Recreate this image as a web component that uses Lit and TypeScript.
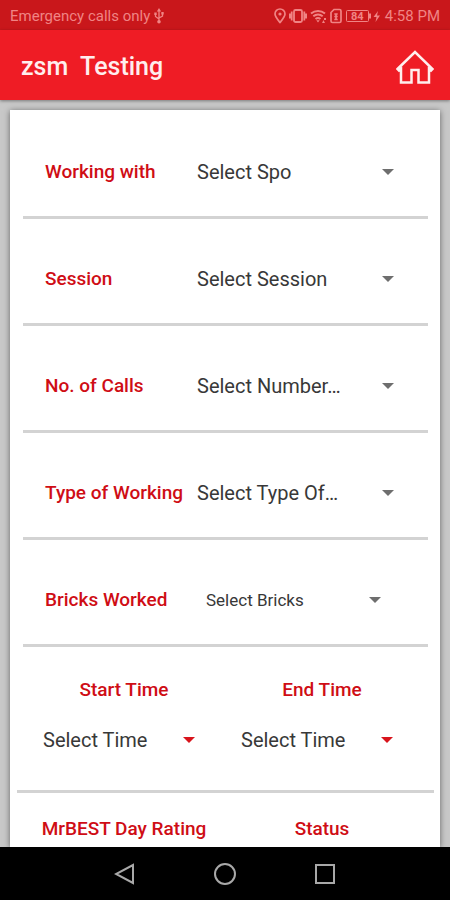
import { LitElement, html, css, svg } from "lit";
import { customElement, property } from "lit/decorators.js";

@customElement("status-bar")
class StatusBar extends LitElement {
  static styles = css`
    :host {
      display: flex;
      align-items: center;
      justify-content: space-between;
      height: 30px;
      padding: 2px 10px 0;
      box-sizing: border-box;
      background: #c9171b;
      color: #f08484;
      font-size: 15px;
      line-height: 20px;
    }
    .group { display: flex; align-items: center; gap: 4px; }
    .icons { gap: 3px; }
    svg { display: block; fill: none; stroke: currentColor; }
    .solid { fill: currentColor; stroke: none; }
    .level { font-size: 11px; font-weight: 700; fill: currentColor; stroke: none; }
  `;

  render() {
    return html`
      <div class="group">
        <span>Emergency calls only</span>
        <svg width="10" height="16" viewBox="0 0 10 16" stroke-width="1.3">
          <path d="M5 2v11M1.5 6v2.5L5 11M8.5 5.500v2.500L5 10" />
          <path class="solid" d="M5 0l2.200 3.500H2.800zM.3 4.500h2.400v2.400H.3zM7.300 4h2.400v2.400H7.300z" />
          <circle class="solid" cx="5" cy="13.800" r="1.800" />
        </svg>
      </div>
      <div class="group icons">
        <svg width="12" height="16" viewBox="0 0 12 16" stroke-width="1.700">
          <path d="M6 14.500C3 10.800 1 8.500 1 6a5 5 0 0 1 10 0c0 2.500-2 4.800-5 8.500z" />
          <circle class="solid" cx="6" cy="6" r="1.600" />
        </svg>
        <svg width="18" height="16" viewBox="0 0 18 16" stroke-width="1.800">
          <rect x="5" y="2" width="8" height="12" rx="1.500" />
          <path d="M2.700 3.500v9M.900 5.500v5M15.300 3.500v9M17.100 5.500v5" />
        </svg>
        <svg width="17" height="16" viewBox="0 0 17 16" stroke-width="2">
          <path d="M1 5.500a11 11 0 0 1 14 0M3.300 8.300a7.400 7.400 0 0 1 9.400 0M5.500 11a4 4 0 0 1 5 0" />
          <path class="solid" d="M8 14.500l-1.700-2.200h3.400zM12 15l1.500-3 1.500 3zM14 10h2v2h-2z" />
        </svg>
        <svg width="12" height="16" viewBox="0 0 12 16" stroke-width="1.700">
          <path d="M4 1.500h5.500a1.500 1.500 0 0 1 1.500 1.500v10a1.500 1.500 0 0 1-1.500 1.500h-7A1.500 1.500 0 0 1 1 13V4.500z" />
          <path d="M4.300 6h3.400M4.300 8.500h3.400M4.300 11.500h3.400M6 6v5" />
        </svg>
        <svg width="37" height="16" viewBox="0 0 37 16" stroke-width="1">
          <rect x="1.500" y="2.500" width="22" height="11" rx="1" />
          <path class="solid" d="M24 5.500h2v5h-2zM33 3l-4.500 6h3l-1 5 4.500-6.500h-3z" />
          <text class="level" x="6" y="12">84</text>
        </svg>
        <span>4:58 PM</span>
      </div>
    `;
  }
}

@customElement("select-field")
class SelectField extends LitElement {
  @property() label = "";
  @property() text = "";

  static styles = css`
    :host { display: grid; align-items: center; min-width: 0; }
    select, svg { grid-area: 1 / 1; }
    select {
      appearance: none;
      width: 100%;
      height: 40px;
      margin: 0;
      padding: 0 20px 0 0;
      border: 0;
      background: none;
      color: #383838;
      font: inherit;
    }
    svg {
      justify-self: end;
      pointer-events: none;
      fill: var(--arrow, #6e6e6e);
    }
  `;

  render() {
    return html`
      <select aria-label=${this.label}><option>${this.text}</option></select>
      <svg width="12" height="6" viewBox="0 0 12 6"><path d="M0 0h12L6 6z" /></svg>
    `;
  }
}

const rows = [
  { label: "Working with", text: "Select Spo" },
  { label: "Session", text: "Select Session" },
  { label: "No. of Calls", text: "Select Number…" },
  { label: "Type of Working", text: "Select Type Of…" },
  { label: "Bricks Worked", text: "Select Bricks", inset: true },
];

const backIcon = svg`<path d="M19 2v18L2 11z" />`;
const homeIcon = svg`<circle cx="11" cy="11" r="10" />`;
const recentIcon = svg`<rect x="2" y="2" width="18" height="18" />`;

@customElement("app-root")
class AppRoot extends LitElement {
  static styles = css`
    :host {
      display: flex;
      flex-direction: column;
      height: 100vh;
      overflow: hidden;
      background: #c8c8c8;
      font-family: Roboto, "Liberation Sans", sans-serif;
    }
    status-bar, header, nav { flex: none; }
    header {
      display: flex;
      align-items: center;
      justify-content: space-between;
      height: 70px;
      padding: 3px 16px 0 21px;
      box-sizing: border-box;
      background: #ef1c25;
      color: #ffeeee;
      box-shadow: 0 1px 3px #00000066;
    }
    h1 {
      margin: 0;
      font-size: 25px;
      line-height: 32px;
      font-weight: 500;
      white-space: pre;
    }
    button {
      display: block;
      margin: 0;
      padding: 0;
      border: 0;
      background: none;
      color: inherit;
    }
    button svg { display: block; fill: none; stroke: currentColor; stroke-width: 2; }
    .home svg { stroke-width: 2.5; }
    main {
      flex: 1;
      min-height: 0;
      overflow: hidden;
      padding: 10px 10px 0;
    }
    .card {
      min-height: 100%;
      padding-top: 2px;
      box-sizing: border-box;
      background: #fff;
      box-shadow: 0 1px 6px #00000080;
    }
    .row {
      display: grid;
      grid-template-columns: 152px 1fr;
      align-items: center;
      height: 107px;
      margin: 0 12px 0 13px;
      padding: 15px 34px 0 22px;
      box-sizing: border-box;
      border-bottom: 3px solid #d3d3d3;
    }
    .label {
      color: #cf0d15;
      font-size: 19px;
      line-height: 24px;
      font-weight: 500;
      white-space: nowrap;
    }
    select-field { font-size: 20px; }
    .inset { margin: 0 13px 0 9px; font-size: 17px; }
    .pair {
      display: grid;
      grid-template-columns: 1fr 1fr;
      margin: 0 6px 0 7px;
      padding: 31px 13px 0 8px;
      text-align: center;
    }
    .times {
      padding-bottom: 30px;
      border-bottom: 3px solid #d3d3d3;
      row-gap: 18px;
    }
    .times select-field { margin: 0 28px 0 18px; --arrow: #d8141c; }
    .ratings { padding-top: 24px; }
    nav {
      display: flex;
      align-items: center;
      justify-content: center;
      gap: 78px;
      height: 53px;
      background: #000;
      color: #a8a8a8;
    }
  `;

  render() {
    return html`
      <status-bar></status-bar>
      <header>
        <h1>zsm  Testing</h1>
        <button class="home" aria-label="Home">
          <svg width="38" height="34" viewBox="0 0 38 34">
            <path d="M1.500 19L19 2l17.500 17-1.500 1.500-2-1.500v13.500H22.500V20h-7v12.500H5V19l-2 1.500z" />
          </svg>
        </button>
      </header>
      <main>
        <section class="card">
          ${rows.map(
            (row) => html`
              <div class="row">
                <span class="label">${row.label}</span>
                <select-field class=${row.inset ? "inset" : ""} label=${row.label} text=${row.text}></select-field>
              </div>
            `
          )}
          <div class="pair times">
            <span class="label">Start Time</span>
            <span class="label">End Time</span>
            <select-field label="Start Time" text="Select Time"></select-field>
            <select-field label="End Time" text="Select Time"></select-field>
          </div>
          <div class="pair ratings">
            <span class="label">MrBEST Day Rating</span>
            <span class="label">Status</span>
          </div>
        </section>
      </main>
      <nav>
        <button aria-label="Back"><svg width="22" height="22">${backIcon}</svg></button>
        <button aria-label="Home screen"><svg width="22" height="22">${homeIcon}</svg></button>
        <button aria-label="Recent apps"><svg width="22" height="22">${recentIcon}</svg></button>
      </nav>
    `;
  }
}
